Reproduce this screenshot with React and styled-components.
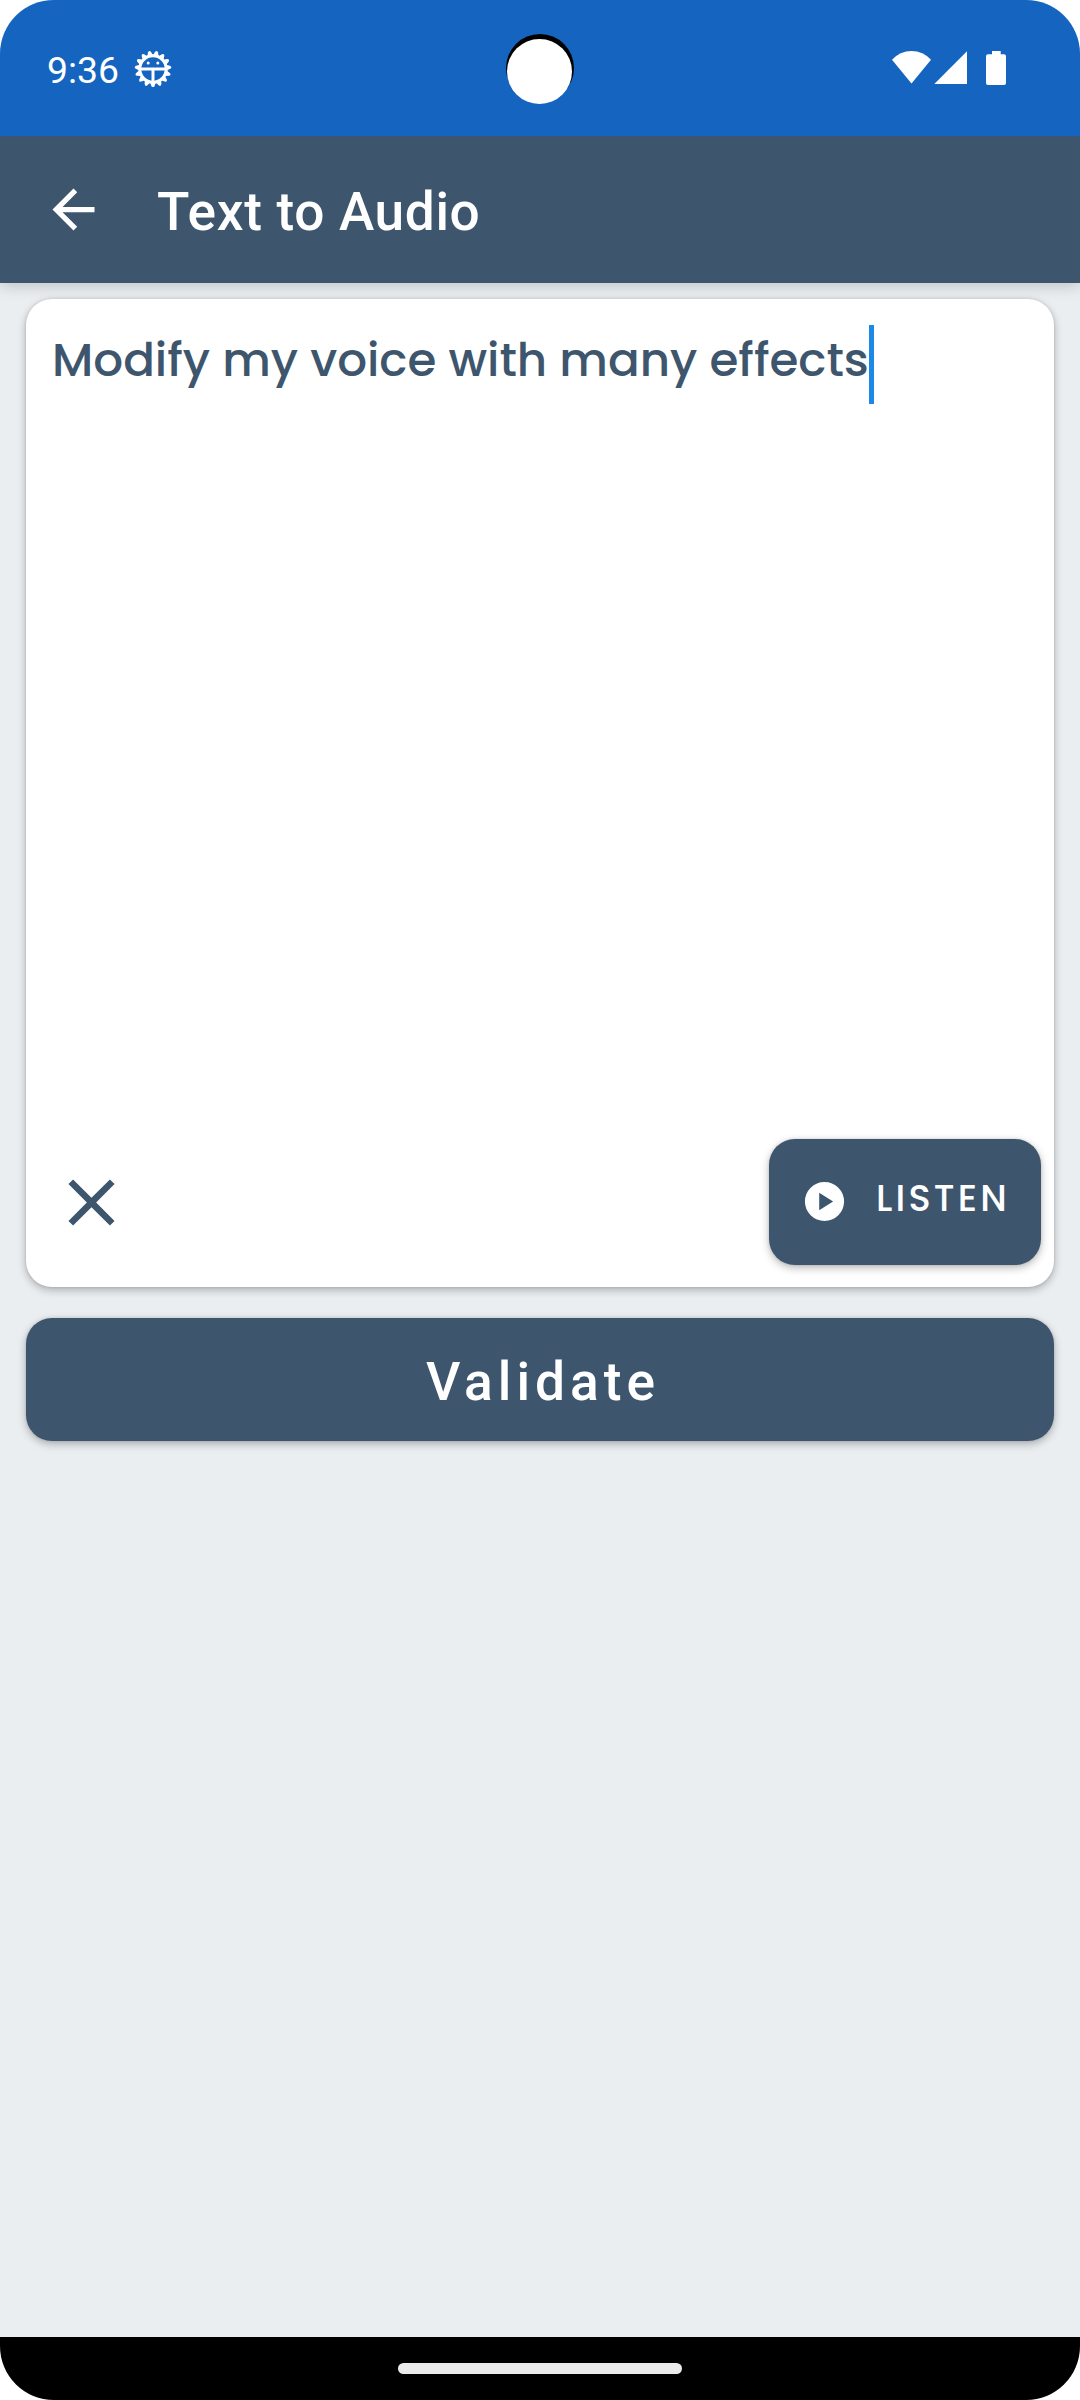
import {useState} from "react";
import styled, {createGlobalStyle} from "styled-components";

const slate="#3e566d";

const GlobalStyle=createGlobalStyle`
*{box-sizing:border-box}
body{
  margin:0;
  background:#fff;
  font-family:Roboto, "Liberation Sans", sans-serif;
}
`;

const Screen=styled.div`
width:1080px;
height:2400px;
display:flex;
flex-direction:column;
background:#eaeef1;
border-radius:54px;
overflow:hidden;
`;

const StatusBar=styled.header`
position:relative;
flex:none;
height:136px;
padding:0 74px 0 47px;
display:flex;
align-items:center;
justify-content:space-between;
background:#1565c0;
color:#fff;
`;

const StatusGroup=styled.div`
display:flex;
align-items:center;
gap:${p=>p.$gap}px;
`;

const Clock=styled.span`
font-size:37.3px;
line-height:44px;
padding-top:3px;
`;

const Camera=styled.div`
position:absolute;
left:506px;
top:34px;
width:68px;
height:68px;
border-radius:50%;
background:#000;
&::after{
  content:"";
  position:absolute;
  left:1px;
  top:5px;
  width:65px;
  height:65px;
  border-radius:50%;
  background:#fff;
}
`;

const AppBar=styled.nav`
flex:none;
height:147px;
padding-left:42px;
display:flex;
align-items:center;
gap:52px;
background:${slate};
color:#fff;
box-shadow:0 3px 14px rgba(0,0,0,0.18);
`;

const Title=styled.h1`
margin:0;
font-size:53.2px;
font-weight:500;
line-height:62px;
padding-top:5px;
letter-spacing:0.66px;
`;

const IconButton=styled.button`
display:flex;
padding:0;
border:none;
background:none;
color:inherit;
`;

const Content=styled.main`
flex:1;
display:flex;
flex-direction:column;
gap:31px;
padding:16px 26px;
`;

const Card=styled.section`
height:988px;
display:flex;
flex-direction:column;
justify-content:space-between;
padding:26px 13px 22px 26px;
border-radius:26px;
background:#fff;
color:${slate};
box-shadow:0 3px 8px rgba(0,0,0,0.27), 0 0 3px rgba(0,0,0,0.12);
`;

const TextLine=styled.div`
display:flex;
height:79px;
font-family:Poppins, Inter, sans-serif;
font-size:46.8px;
font-weight:500;
line-height:70px;
white-space:nowrap;
`;

const Caret=styled.span`
width:5px;
height:79px;
background:#1e88e5;
`;

const CardActions=styled.div`
display:flex;
align-items:center;
justify-content:space-between;
`;

const Button=styled.button`
border:none;
border-radius:26px;
background:${slate};
color:#fff;
font-weight:500;
box-shadow:0 3px 8px rgba(0,0,0,0.27), 0 0 3px rgba(0,0,0,0.12);
`;

const ListenButton=styled(Button)`
width:272px;
height:126px;
display:flex;
align-items:center;
gap:28px;
padding:0 0 2px 32px;
font-family:Poppins, Inter, sans-serif;
font-size:36.75px;
letter-spacing:3.2px;
& span{padding-bottom:6px}
`;

const ValidateButton=styled(Button)`
height:123px;
padding:5px 0 0 6px;
font-family:Roboto, sans-serif;
font-size:53.3px;
letter-spacing:5px;
`;

const NavBar=styled.footer`
flex:none;
height:63px;
display:flex;
justify-content:center;
padding-top:26px;
background:#000;
`;

const Handle=styled.div`
width:284px;
height:11px;
border-radius:6px;
background:#ebebeb;
`;

const Icon=({size,d})=>(
  <svg width={size} height={size} viewBox="0 0 24 24" fill="currentColor"><path d={d}/></svg>
);

// 15 teeth, the lowest one pointing straight down
const teeth=Array.from({length:15},(_,i)=>i*24);

const BugGear=()=>(
  <svg width="38" height="38" viewBox="-19 -20 38 38">
    <circle r="13.2" fill="none" stroke="#fff" strokeWidth="3"/>
    {teeth.map(a=>(
      <path key={a} transform={`rotate(${a})`} d="M-2.900 13.500L-1.500 17.200Q0 19.600 1.500 17.200L2.900 13.500Z" fill="#fff"/>
    ))}
    <path d="M-13 0H13M0 0V13" stroke="#fff" strokeWidth="3"/>
    <circle cx="-4.8" cy="-6" r="1.5" fill="#fff"/>
    <circle cx="4.8" cy="-6" r="1.5" fill="#fff"/>
  </svg>
);

const StatusIcons=()=>(
  <svg width="114" height="36" viewBox="0 0 114 36" fill="#fff">
    <path d="M0 9.8Q8 1 19.5 1T39 9.8L19.5 33.5Z"/>
    <path d="M42.3 34L75 1.2V34Z"/>
    <path d="M100 1h8.7v3.3H112a2 2 0 0 1 2 2V33a2 2 0 0 1-2 2H96a2 2 0 0 1-2-2V6.300a2 2 0 0 1 2-2h4z"/>
  </svg>
);

export default function App(){
const [text,setText]=useState("Modify my voice with many effects");

return(
<>
<GlobalStyle/>
<Screen>
  <StatusBar>
    <StatusGroup $gap={15}>
      <Clock>9:36</Clock>
      <BugGear/>
    </StatusGroup>
    <Camera/>
    <StatusIcons/>
  </StatusBar>
  <AppBar>
    <IconButton aria-label="Back">
      <Icon size={63} d="M20 11H7.830l5.590-5.590L12 4l-8 8 8 8 1.410-1.410L7.830 13H20v-2z"/>
    </IconButton>
    <Title>Text to Audio</Title>
  </AppBar>
  <Content>
    <Card>
      <TextLine><span>{text}</span><Caret/></TextLine>
      <CardActions>
        <IconButton aria-label="Clear" onClick={()=>setText("")}>
          <Icon size={79} d="M19 6.410L17.590 5 12 10.590 6.410 5 5 6.410 10.590 12 5 17.590 6.410 19 12 13.410 17.590 19 19 17.590 13.410 12z"/>
        </IconButton>
        <ListenButton>
          <Icon size={47} d="M12 2a10 10 0 1 0 0 20a10 10 0 1 0 0-20zM9.300 16.500v-9l7.100 4.500z"/>
          <span>LISTEN</span>
        </ListenButton>
      </CardActions>
    </Card>
    <ValidateButton>Validate</ValidateButton>
  </Content>
  <NavBar><Handle/></NavBar>
</Screen>
</>
)}
